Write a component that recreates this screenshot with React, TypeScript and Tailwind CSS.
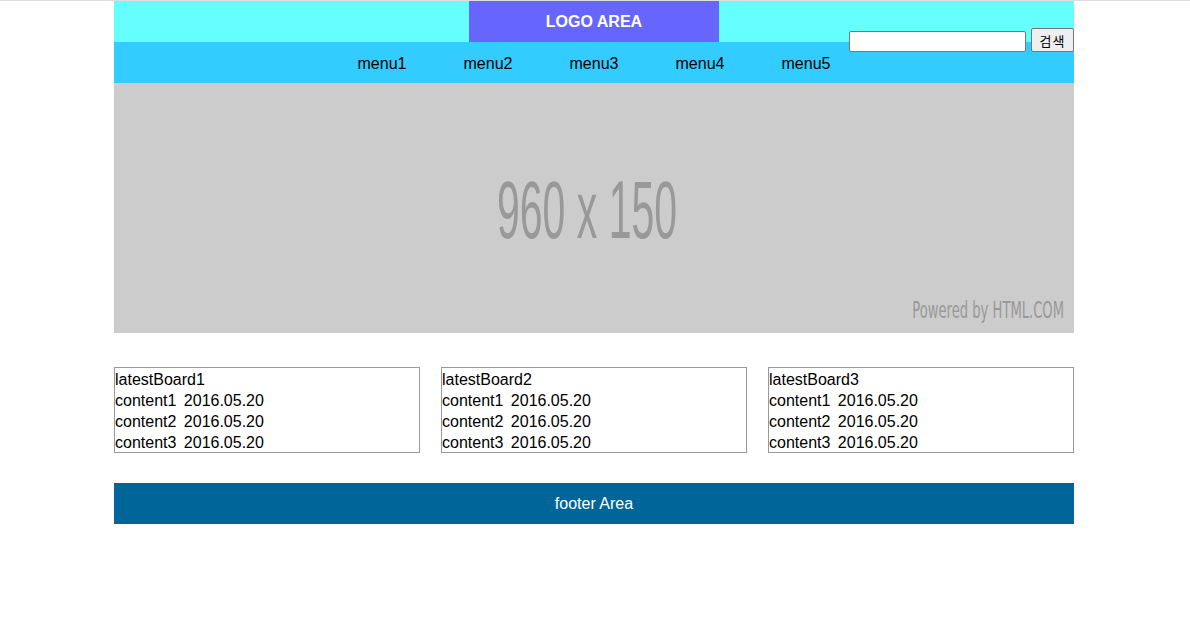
import React from "react";

export default function App() {
  const font = { fontFamily: '"Liberation Sans", "Noto Sans CJK KR", Arial, sans-serif' };
  const boards = [1, 2, 3];
  return (
    <div className="min-h-[625px] bg-white border-t border-[#dedede]" style={font}>
      <div className="relative ml-[114px] w-[960px] text-[16px] text-black">
        <header className="flex h-[41px] justify-center bg-[#66ffff]">
          <div className="flex w-[250px] items-center justify-center bg-[#6666ff] text-[16px] font-bold text-white">
            LOGO AREA
          </div>
        </header>
        <div className="absolute right-0 top-[27px] flex items-end gap-[5px]">
          <input
            type="text"
            className="h-[21px] w-[177px] rounded-[2px] border border-[#767676] bg-white px-1 text-[13px]"
          />
          <button
            className="h-[24px] w-[43px] rounded-[2px] border border-[#767676] bg-[#efefef] text-[13px] leading-none tracking-[1px]"
            style={{ fontFamily: '"Noto Sans CJK KR", sans-serif' }}
          >
            검색
          </button>
        </div>
        <nav className="flex h-[41px] items-center justify-center bg-[#33ccff] pt-[2px]">
          {[1, 2, 3, 4, 5].map((n) => (
            <div key={n} className="w-[106px] text-center text-[16px] leading-none">
              menu{n}
            </div>
          ))}
        </nav>
        <div className="relative flex h-[250px] items-center justify-center overflow-hidden bg-[#cccccc]">
          <div className="mr-[14px] mt-[4px] text-[#999999]">
            <span className="block origin-center scale-y-[2] text-[41px] leading-none">
              960 x 150
            </span>
          </div>
          <div
            className="absolute right-[10px] top-[220px] text-[#999999]"
            style={{ fontFamily: '"DejaVu Sans", sans-serif' }}
          >
            <span className="block origin-right scale-y-[1.45] scale-x-[0.82] text-[16px] leading-none">
              Powered by HTML.COM
            </span>
          </div>
        </div>
        <div className="mt-[34px] flex justify-between">
          {boards.map((b) => (
            <div key={b} className="h-[86px] w-[306px] overflow-hidden border border-[#999999] text-[16px] leading-[21px]">
              <div className="relative top-[1px]">
                <div className="h-[21px]">latestBoard{b}</div>
                <div className="h-[21px] [word-spacing:3px]">content1 2016.05.20</div>
                <div className="h-[21px] [word-spacing:3px]">content2 2016.05.20</div>
                <div className="h-[21px] [word-spacing:3px]">content3 2016.05.20</div>
              </div>
            </div>
          ))}
        </div>
        <footer className="mt-[30px] flex h-[41px] items-center justify-center bg-[#006699] pt-[1px] text-[16px] text-white">
          footer Area
        </footer>
      </div>
    </div>
  );
}
